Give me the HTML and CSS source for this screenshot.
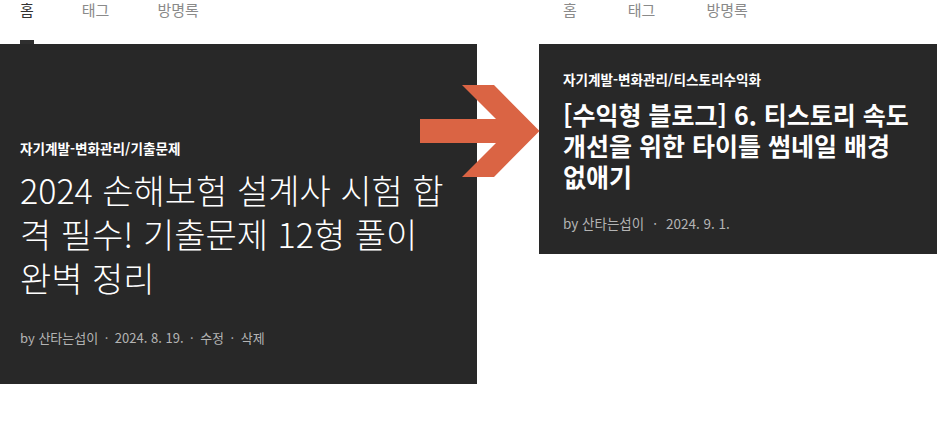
FILE: index.html
```html
<!DOCTYPE html>
<html lang="ko">
<head>
<meta charset="utf-8">
<link rel="stylesheet" href="styles.css">
</head>
<body>
<div class="stage">
  <section class="col col-left">
    <nav class="nav">
      <a class="nav-item active">홈</a>
      <a class="nav-item">태그</a>
      <a class="nav-item">방명록</a>
    </nav>
    <article class="card card-big">
      <div class="cat">자기계발-변화관리/기출문제</div>
      <h2 class="title title-big">2024 손해보험 설계사 시험 합격 필수! 기출문제 12형 풀이 완벽 정리</h2>
      <div class="meta">by 산타는섭이<span class="dot">·</span>2024. 8. 19.<span class="dot">·</span>수정<span class="dot">·</span>삭제</div>
    </article>
  </section>
  <section class="col col-right">
    <nav class="nav nav-right">
      <a class="nav-item">홈</a>
      <a class="nav-item">태그</a>
      <a class="nav-item">방명록</a>
    </nav>
    <article class="card card-small">
      <div class="cat cat-small">자기계발-변화관리/티스토리수익화</div>
      <h2 class="title title-small">[수익형 블로그] 6. 티스토리 속도 개선을 위한 타이틀 썸네일 배경 없애기</h2>
      <div class="meta meta-small">by 산타는섭이<span class="dot">·</span>2024. 9. 1.</div>
    </article>
  </section>
  <svg class="arrow" width="120" height="94" viewBox="420 84 120 94">
    <polygon points="420,119 496,119 462,85 494,85 539.5,131 494,177 462,177 496,143 420,143" fill="#da6444"/>
  </svg>
</div>
</body>
</html>
```
FILE: styles.css
```css
* { box-sizing: border-box; }
html, body { margin: 0; padding: 0; background: #fff; }
body {
  font-family: "Noto Sans CJK KR", "Noto Sans", sans-serif;
  width: 937px;
  height: 424px;
  overflow: hidden;
}
.stage {
  position: relative;
  display: flex;
  gap: 62px;
  align-items: flex-start;
}
.col-left { width: 477px; }
.col-right { width: 398px; }
.nav {
  display: flex;
  gap: 48px;
  height: 44px;
  padding-left: 20px;
}
.nav-right { padding-left: 24px; gap: 51px; }
.nav-item {
  display: block;
  height: 44px;
  font-size: 15px;
  line-height: 20px;
  color: #8a8a8a;
  text-decoration: none;
}
.nav-item.active {
  color: #333;
  border-bottom: 4px solid #2f2f2f;
}
.card {
  background: #282828;
  color: #fff;
}
.card-big {
  height: 340px;
  padding: 95px 20px 0 20px;
}
.card-small {
  height: 210px;
  padding: 26px 24px 0 24px;
}
.cat {
  font-size: 13.6px;
  font-weight: 700;
  line-height: 19px;
  color: #fff;
}
.title {
  margin: 0;
  color: #fff;
  word-break: break-all;
}
.title-big {
  margin-top: 10px;
  font-size: 34px;
  font-weight: 300;
  line-height: 44px;
}
.title-small {
  margin-top: 10px;
  font-size: 25px;
  font-weight: 700;
  line-height: 31px;
}
.meta {
  font-size: 13px;
  line-height: 19px;
  color: #b4b4b4;
  margin-top: 28px;
}
.dot { margin: 0 6.5px; }
.meta-small { margin-top: 22px; font-size: 13.5px; }
.meta-small .dot { margin: 0 9px; }
.arrow {
  position: absolute;
  left: 420px;
  top: 84px;
}
```
